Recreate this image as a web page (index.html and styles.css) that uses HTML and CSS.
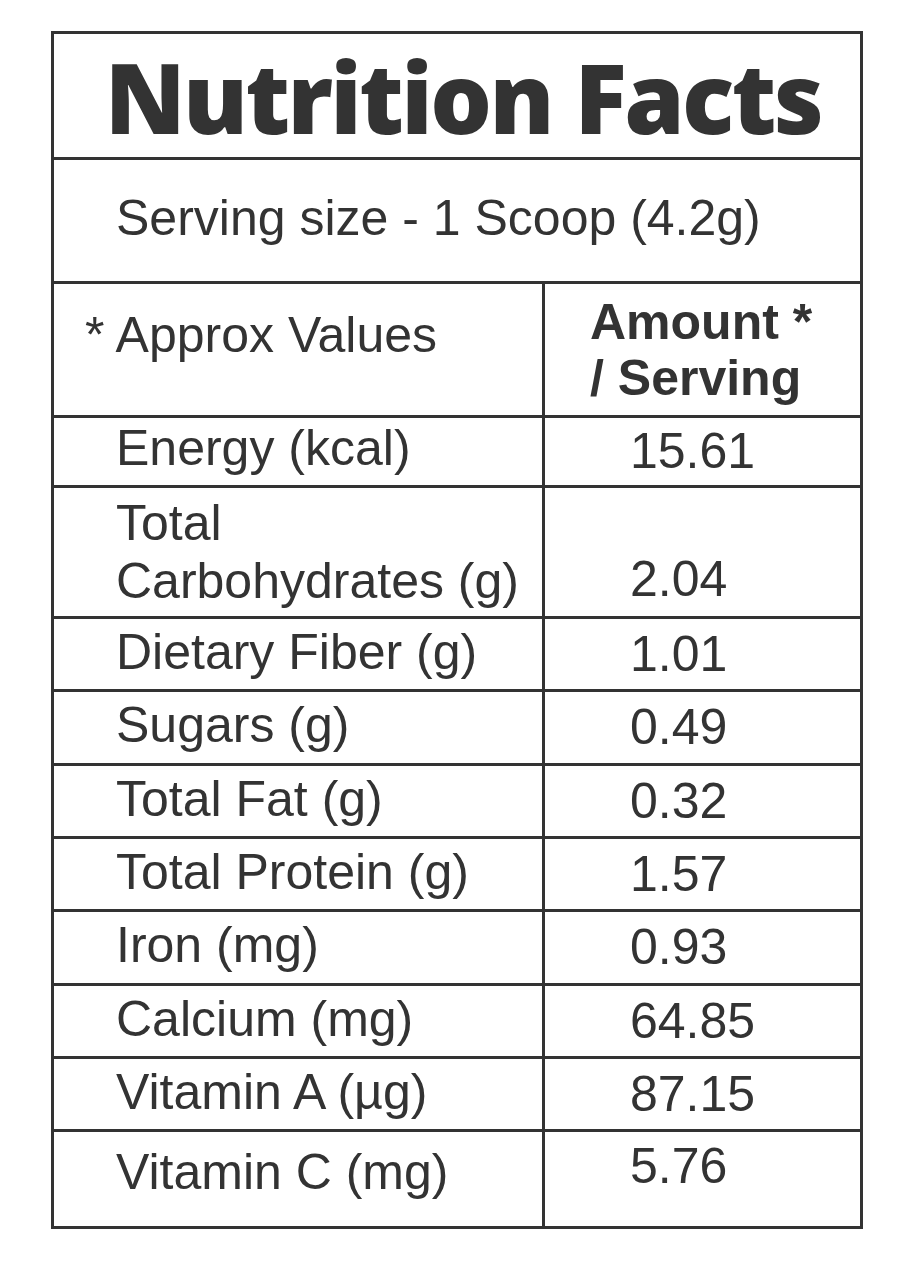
FILE: index.html
```html
<!DOCTYPE html>
<html lang="en">
<head>
<meta charset="utf-8">
<title>Nutrition Facts</title>
<link rel="stylesheet" href="styles.css">
</head>
<body>
<div class="label">
  <div class="title"><span class="title-text">Nutrition Facts</span></div>
  <div class="serving">Serving size - 1 Scoop (4.2g)</div>
  <div class="row head">
    <div class="name">* Approx Values</div>
    <div class="amt">Amount *<br>/ Serving</div>
  </div>
  <div class="row energy">
    <div class="name">Energy (kcal)</div>
    <div class="amt">15.61</div>
  </div>
  <div class="row carbs">
    <div class="name">Total<br>Carbohydrates (g)</div>
    <div class="amt">2.04</div>
  </div>
  <div class="row">
    <div class="name">Dietary Fiber (g)</div>
    <div class="amt">1.01</div>
  </div>
  <div class="row plus">
    <div class="name">Sugars (g)</div>
    <div class="amt">0.49</div>
  </div>
  <div class="row">
    <div class="name">Total Fat (g)</div>
    <div class="amt">0.32</div>
  </div>
  <div class="row">
    <div class="name">Total Protein (g)</div>
    <div class="amt">1.57</div>
  </div>
  <div class="row plus">
    <div class="name">Iron (mg)</div>
    <div class="amt">0.93</div>
  </div>
  <div class="row">
    <div class="name">Calcium (mg)</div>
    <div class="amt">64.85</div>
  </div>
  <div class="row">
    <div class="name">Vitamin A (&micro;g)</div>
    <div class="amt">87.15</div>
  </div>
  <div class="row last">
    <div class="name">Vitamin C (mg)</div>
    <div class="amt">5.76</div>
  </div>
</div>
</body>
</html>
```

FILE: styles.css
```css
* { box-sizing: border-box; }
html, body { margin: 0; padding: 0; background: #ffffff; }
body {
  font-family: "Liberation Sans", Arial, sans-serif;
  color: #333333;
}
.label {
  margin: 31px 0 0 51px;
  width: 812px;
  border: 3px solid #333333;
}
.title {
  height: 123px;
  padding: 14px 0 0 12px;
  text-align: center;
  font-family: "Open Sans", "Noto Sans", sans-serif;
  font-weight: 800;
  font-size: 97px;
  line-height: 97px;
  color: #333333;
  white-space: nowrap;
}
.title-text { letter-spacing: -2.6px; }
.serving {
  height: 124px;
  border-top: 3px solid #333333;
  padding: 29px 0 0 62px;
  font-size: 50px;
  line-height: 58px;
}
.row {
  display: grid;
  grid-template-columns: 491px 1fr;
  height: 73px;
  border-top: 3px solid #333333;
  font-size: 50px;
  line-height: 58px;
}
.row.plus { height: 74px; }
.name {
  border-right: 3px solid #333333;
  padding: 4px 0 0 62px;
  white-space: nowrap;
}
.amt {
  padding: 6px 0 0 85px;
  white-space: nowrap;
}
.head { height: 134px; }
.head .name { padding: 22px 0 0 31px; }
.head .amt {
  padding: 10px 0 0 45px;
  font-weight: 700;
  line-height: 56px;
}
.energy { height: 70px; }
.energy .name { padding-top: 1px; }
.energy .amt { padding-top: 4px; }
.carbs { height: 131px; }
.carbs .name { padding-top: 6px; }
.carbs .amt { padding-top: 62px; }
.last { height: 97px; }
.last .name { padding-top: 11px; }
.last .amt { padding-top: 5px; }
```
